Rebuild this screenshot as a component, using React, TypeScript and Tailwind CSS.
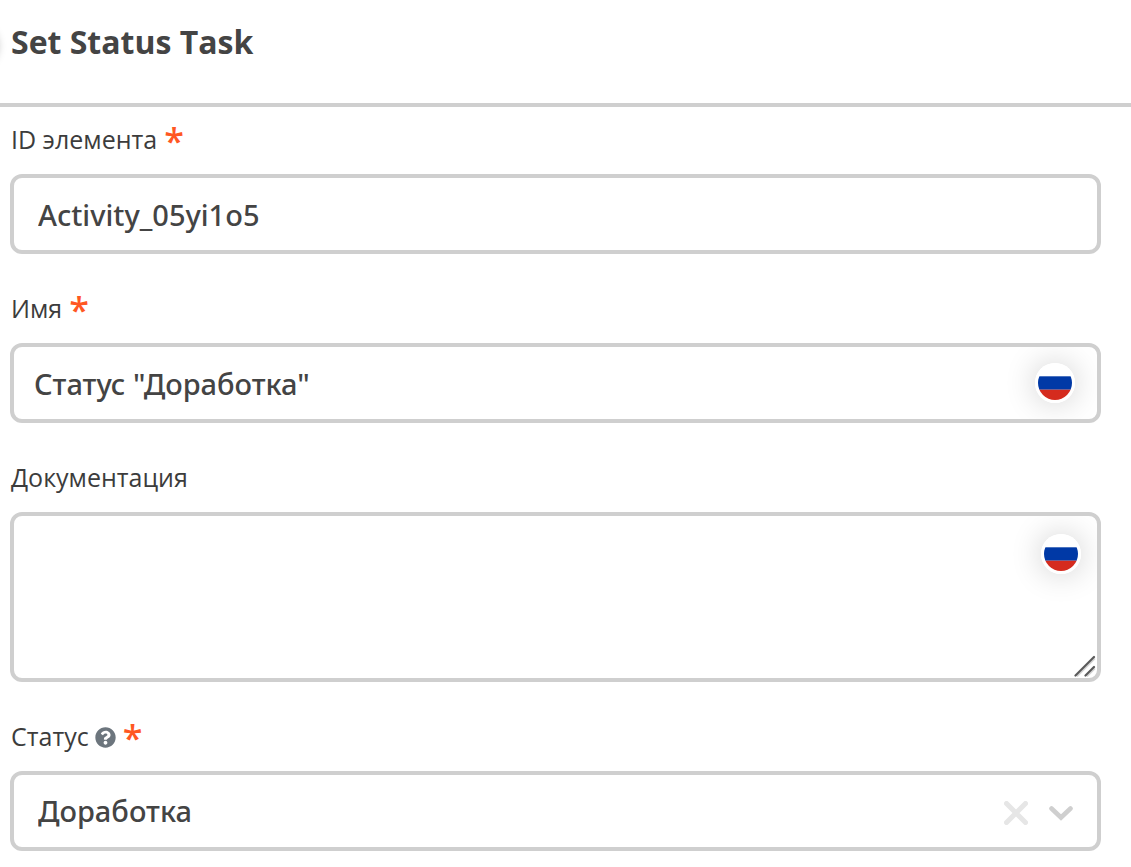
import { useState } from "react";
import type { ReactNode } from "react";

const boxClass =
  "block w-full rounded-xl border-4 border-[#cfcfcf] bg-white font-['Noto_Sans','Open_Sans',sans-serif] text-[29px] font-medium text-[#444] outline-none focus:border-[#a9a9a9]";

function RussianFlag() {
  return (
    <svg viewBox="0 0 40 40" className="size-10" aria-hidden="true">
      <defs>
        <clipPath id="flag-disc">
          <circle cx="20" cy="20" r="17" />
        </clipPath>
      </defs>
      <circle cx="20" cy="20" r="20" fill="#fff" />
      <g clipPath="url(#flag-disc)">
        <rect x="3" y="13.3" width="34" height="13.4" fill="#0039a6" />
        <rect x="3" y="26.7" width="34" height="11" fill="#d52b1e" />
      </g>
    </svg>
  );
}

function LanguageButton({ label }: { label: string }) {
  return (
    <button
      type="button"
      aria-label={label}
      className="pointer-events-auto block size-10 cursor-pointer rounded-full shadow-[0_0_32px_rgba(0,0,0,0.2)]"
    >
      <RussianFlag />
    </button>
  );
}

function HelpIcon() {
  return (
    <svg viewBox="0 0 512 512" className="ml-1.5 size-[21px]" aria-hidden="true">
      <path
        fill="#6c757d"
        d="M504 256c0 136.997-111.043 248-248 248S8 392.997 8 256C8 119.083 119.043 8 256 8s248 111.083 248 248zM262.655 90c-54.497 0-89.255 22.957-116.549 63.758-3.536 5.286-2.353 12.415 2.715 16.258l34.699 26.31c5.205 3.947 12.621 3.008 16.665-2.122 17.864-22.658 30.113-35.797 57.303-35.797 20.429 0 45.698 13.148 45.698 32.958 0 14.976-12.363 22.667-32.534 33.976C247.128 238.528 216 254.941 216 296v4c0 6.627 5.373 12 12 12h56c6.627 0 12-5.373 12-12v-1.333c0-28.462 83.186-29.647 83.186-106.667 0-58.002-60.165-102-116.531-102zM256 338c-25.365 0-46 20.635-46 46 0 25.364 20.635 46 46 46s46-20.636 46-46c0-25.364-20.635-46-46-46z"
      />
    </svg>
  );
}

interface FieldProps {
  id: string;
  label: string;
  required?: boolean;
  help?: boolean;
  children: ReactNode;
}

function Field({ id, label, required, help, children }: FieldProps) {
  return (
    <div>
      <label htmlFor={id} className="flex h-[67px] items-center pl-px text-[25px] leading-8 text-[#3c3c3c]">
        <span className="pb-[3px]">{label}</span>
        {help && <HelpIcon />}
        {required && (
          <span
            aria-hidden="true"
            className="ml-[7px] font-['Noto_Sans','Open_Sans',sans-serif] text-[36px] font-medium text-[#ff5722]"
          >
            *
          </span>
        )}
      </label>
      <div className="relative">{children}</div>
    </div>
  );
}

export default function App() {
  const [elementId, setElementId] = useState("Activity_05yi1o5");
  const [name, setName] = useState('Статус "Доработка"');
  const [documentation, setDocumentation] = useState("");
  const [status, setStatus] = useState("Доработка");

  return (
    <main className="min-h-screen bg-white font-['Open_Sans','Noto_Sans',sans-serif] text-[#444]">
      <header className="relative border-b-4 border-[#cfcfcf] px-[11px] pt-[18px] pb-[38px]">
        <div
          aria-hidden="true"
          className="absolute top-[26px] -left-[42px] size-10 rounded-full shadow-[0_0_8px_rgba(0,0,0,0.25)]"
        />
        <h1 className="text-[32px] leading-[47px] font-bold">Set Status Task</h1>
      </header>

      <form className="flex flex-col gap-[22px] pr-[30px] pb-4 pl-[10px]">
        <Field id="element-id" label="ID элемента" required>
          <input
            id="element-id"
            type="text"
            required
            value={elementId}
            onChange={(e) => setElementId(e.target.value)}
            className={`${boxClass} h-20 px-6`}
          />
        </Field>

        <Field id="element-name" label="Имя" required>
          <input
            id="element-name"
            type="text"
            required
            value={name}
            onChange={(e) => setName(e.target.value)}
            className={`${boxClass} h-20 pr-20 pl-5`}
          />
          <div className="pointer-events-none absolute inset-1 flex justify-end overflow-hidden rounded-lg pt-4 pr-[22px]">
            <LanguageButton label="Язык имени" />
          </div>
        </Field>

        <Field id="documentation" label="Документация">
          <textarea
            id="documentation"
            value={documentation}
            onChange={(e) => setDocumentation(e.target.value)}
            className={`${boxClass} h-[170px] resize-none py-4 pr-20 pl-5`}
          />
          <div className="pointer-events-none absolute inset-1 flex justify-end overflow-hidden rounded-lg pt-[18px] pr-4">
            <LanguageButton label="Язык документации" />
          </div>
          <svg
            viewBox="0 0 22 22"
            className="pointer-events-none absolute right-[5px] bottom-[5px] size-[22px]"
            aria-hidden="true"
          >
            <path d="M3 21.5 21 3.5M13 21.5 21 13.5" stroke="#d4d4d4" strokeWidth="1.6" />
            <path d="M1.5 20.5 20 2M11.5 20.5 20 12" stroke="#5a5a5a" strokeWidth="2.2" strokeLinecap="round" />
          </svg>
        </Field>

        <Field id="status" label="Статус" required help>
          <select
            id="status"
            required
            value={status}
            onChange={(e) => setStatus(e.target.value)}
            className={`${boxClass} h-20 appearance-none pr-28 pl-6`}
          >
            <option value="" hidden />
            <option value="Доработка">Доработка</option>
          </select>
          <div className="pointer-events-none absolute inset-y-0 right-7 flex items-center gap-[21px] pt-[3px]">
            <button
              type="button"
              aria-label="Очистить"
              onClick={() => setStatus("")}
              className="pointer-events-auto cursor-pointer"
            >
              <svg viewBox="0 0 24 24" className="size-6" aria-hidden="true">
                <path d="M2.5 2.5 21.5 21.5M21.5 2.5 2.5 21.5" stroke="#e6e6e6" strokeWidth="5" strokeLinecap="round" />
              </svg>
            </button>
            <svg viewBox="0 0 24 24" className="size-6" fill="none" aria-hidden="true">
              <path d="M2.5 7.5 12 16.5 21.5 7.5" stroke="#cfcfcf" strokeWidth="4.6" strokeLinecap="round" strokeLinejoin="miter" />
            </svg>
          </div>
        </Field>
      </form>
    </main>
  );
}
